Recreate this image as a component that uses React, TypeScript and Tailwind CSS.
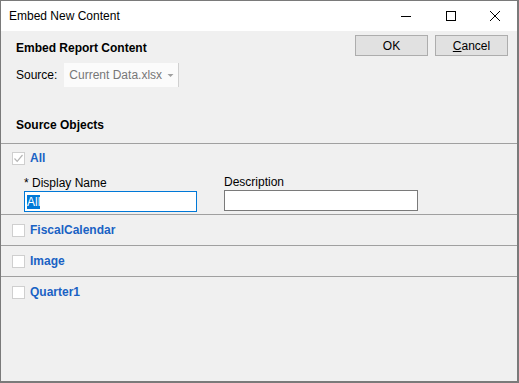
import React from "react";

const font = { fontFamily: '"Liberation Sans", Arial, sans-serif' };

function Check({ checked }: { checked?: boolean }) {
  return (
    <div className="w-[13px] h-[13px] border border-[#cfcfcf] bg-white flex items-center justify-center shrink-0">
      {checked && (
        <svg width="11" height="11" viewBox="0 0 11 11">
          <path d="M1.5 5.5 L4.2 8.3 L9.5 2" fill="none" stroke="#b5b5b5" strokeWidth="1.2" />
        </svg>
      )}
    </div>
  );
}

function Row({ label, last }: { label: string; last?: boolean }) {
  return (
    <div className="border-t border-[#a0a0a0] h-[31px] flex items-center pl-[11px] gap-[5px]">
      <Check />
      <span className="text-[12px] leading-[14px] font-bold text-[#1a62c4]">{label}</span>
    </div>
  );
}

export default function App() {
  return (
    <div style={font} className="w-[519px] h-[383px] bg-[#f0f0f0] flex flex-col border-l border-r-2 border-b-2 border-t border-[#7a7a7a] overflow-hidden text-black">
      {/* title bar */}
      <div className="h-[30px] bg-white flex items-center shrink-0">
        <span className="pl-[8px] text-[12px] leading-[16px] text-black">Embed New Content</span>
        <div className="ml-auto flex items-center h-full">
          <div className="w-[45px] h-full flex items-center justify-center">
            <svg width="12" height="12" viewBox="0 0 12 12"><path d="M1 6.5 H11" stroke="#000" strokeWidth="1" /></svg>
          </div>
          <div className="w-[45px] h-full flex items-center justify-center">
            <svg width="12" height="12" viewBox="0 0 12 12"><rect x="1.5" y="1.5" width="9" height="9" fill="none" stroke="#000" strokeWidth="1" /></svg>
          </div>
          <div className="w-[44px] h-full flex items-center justify-center">
            <svg width="12" height="12" viewBox="0 0 12 12"><path d="M1 1 L11 11 M11 1 L1 11" stroke="#000" strokeWidth="1" /></svg>
          </div>
        </div>
      </div>

      {/* header area */}
      <div className="flex pl-[15px] pr-[9px] pt-[4px] shrink-0">
        <div className="flex flex-col">
          <div className="text-[12px] leading-[16px] font-bold mt-[5px]">Embed Report Content</div>
          <div className="flex items-center mt-[7px]">
            <span className="text-[12px] leading-[14px]">Source:</span>
            <div className="ml-[7px] w-[115px] h-[24px] bg-[#fbfbfb] border-r border-[#d0d0d0] flex items-center pl-[5px] pr-[4px]">
              <span className="text-[12px] leading-[14px] text-[#777]">Current Data.xlsx</span>
              <svg className="ml-auto" width="7" height="5" viewBox="0 0 7 5"><path d="M0.5 1 L3.5 4 L6.5 1 Z" fill="#a0a0a0" /></svg>
            </div>
          </div>
        </div>
        <div className="ml-auto flex gap-[7px]">
          <button className="w-[73px] h-[21px] bg-[#e1e1e1] border border-[#adadad] text-[12px] leading-[14px] flex items-center justify-center">OK</button>
          <button className="w-[73px] h-[21px] bg-[#e1e1e1] border border-[#adadad] text-[12px] leading-[14px] flex items-center justify-center">
            <span><span className="underline">C</span>ancel</span>
          </button>
        </div>
      </div>

      <div className="pl-[15px] text-[12px] leading-[16px] font-bold mt-[30px] h-[26px] shrink-0">Source Objects</div>

      {/* list */}
      <div className="flex flex-col flex-1">
        <div className="border-t border-[#a0a0a0] pt-[7px] pb-[2px]">
          <div className="flex items-center pl-[11px] gap-[5px] h-[14px]">
            <Check checked />
            <span className="text-[12px] leading-[14px] font-bold text-[#1a62c4]">All</span>
          </div>
          <div className="flex pl-[23px] mt-[11px] gap-[27px]">
            <div className="flex flex-col">
              <span className="text-[12px] leading-[14px]">* Display Name</span>
              <div className="mt-[1px] w-[173px] h-[21px] bg-white border border-[#0078d7] flex items-center pl-[2px]">
                <span className="text-[12px] bg-[#0078d7] text-white leading-[14px]">All</span>
              </div>
            </div>
            <div className="flex flex-col -mt-[1px]">
              <span className="text-[12px] leading-[14px]">Description</span>
              <div className="mt-[1px] w-[194px] h-[21px] bg-white border border-[#7a7a7a]" />
            </div>
          </div>
        </div>
        <Row label="FiscalCalendar" />
        <Row label="Image" />
        <Row label="Quarter1" />
      </div>
    </div>
  );
}
